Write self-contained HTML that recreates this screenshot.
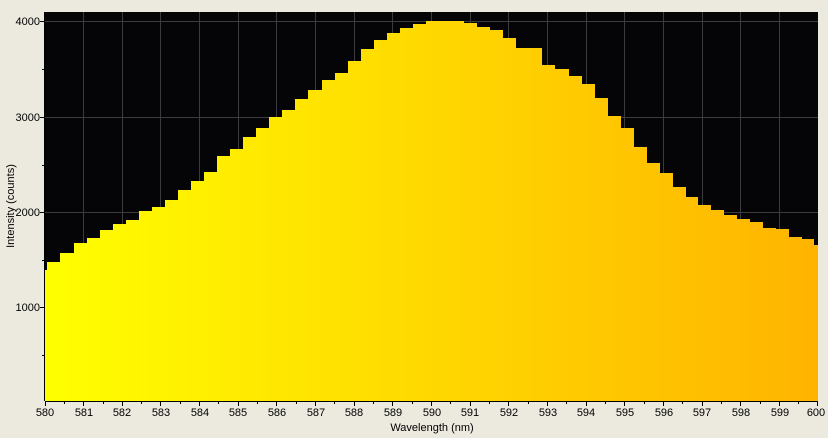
<!DOCTYPE html>
<html><head><style>
html,body{margin:0;padding:0;background:#ece9df;width:828px;height:438px;overflow:hidden}
svg{display:block}
text{font-family:"Liberation Sans",sans-serif;font-size:11px;fill:#000}
</style></head><body>
<svg width="828" height="438" viewBox="0 0 828 438">
<defs>
<linearGradient id="g" x1="45" y1="0" x2="818" y2="0" gradientUnits="userSpaceOnUse">
<stop offset="0" stop-color="#ffff00"/>
<stop offset="0.5" stop-color="#ffd800"/>
<stop offset="1" stop-color="#ffb400"/>
</linearGradient>
</defs>
<rect x="45" y="12" width="773" height="389" fill="#050407"/>
<g stroke="#3c3c3c" stroke-width="1">
<line x1="45" y1="21.5" x2="818" y2="21.5"/>
<line x1="45" y1="117.5" x2="818" y2="117.5"/>
<line x1="45" y1="212.5" x2="818" y2="212.5"/>
<line x1="45" y1="307.5" x2="818" y2="307.5"/>
<line x1="83.5" y1="12" x2="83.5" y2="401"/>
<line x1="122.5" y1="12" x2="122.5" y2="401"/>
<line x1="160.5" y1="12" x2="160.5" y2="401"/>
<line x1="199.5" y1="12" x2="199.5" y2="401"/>
<line x1="238.5" y1="12" x2="238.5" y2="401"/>
<line x1="276.5" y1="12" x2="276.5" y2="401"/>
<line x1="315.5" y1="12" x2="315.5" y2="401"/>
<line x1="354.5" y1="12" x2="354.5" y2="401"/>
<line x1="392.5" y1="12" x2="392.5" y2="401"/>
<line x1="431.5" y1="12" x2="431.5" y2="401"/>
<line x1="470.5" y1="12" x2="470.5" y2="401"/>
<line x1="508.5" y1="12" x2="508.5" y2="401"/>
<line x1="547.5" y1="12" x2="547.5" y2="401"/>
<line x1="586.5" y1="12" x2="586.5" y2="401"/>
<line x1="624.5" y1="12" x2="624.5" y2="401"/>
<line x1="663.5" y1="12" x2="663.5" y2="401"/>
<line x1="702.5" y1="12" x2="702.5" y2="401"/>
<line x1="740.5" y1="12" x2="740.5" y2="401"/>
<line x1="779.5" y1="12" x2="779.5" y2="401"/>
</g>
<polygon fill="url(#g)" points="45,401 45,270 47,270 47,262 60,262 60,253 74,253 74,243 87,243 87,238 100,238 100,230 113,230 113,224 126,224 126,220 139,220 139,211 152,211 152,207 165,207 165,200 178,200 178,190 191,190 191,181 204,181 204,172 217,172 217,156 230,156 230,149 243,149 243,137 256,137 256,128 269,128 269,117 282,117 282,110 295,110 295,99 308,99 308,90 322,90 322,80 335,80 335,73 348,73 348,61 361,61 361,49 374,49 374,40 387,40 387,33 400,33 400,28 413,28 413,24 426,24 426,21 464,21 464,23 477,23 477,27 490,27 490,30 503,30 503,38 516,38 516,48 542,48 542,65 555,65 555,69 569,69 569,76 582,76 582,84 595,84 595,98 608,98 608,116 621,116 621,128 634,128 634,147 647,147 647,163 660,163 660,173 673,173 673,187 686,187 686,197 698,197 698,205 711,205 711,210 724,210 724,215 737,215 737,219 750,219 750,222 763,222 763,228 776,228 776,229 789,229 789,237 802,237 802,239 814,239 814,245 818,245 818,401"/>
<g stroke="#000" stroke-width="1">
<line x1="45" y1="401.5" x2="818" y2="401.5"/>
<line x1="44.5" y1="12" x2="44.5" y2="401"/>
<line x1="40" y1="21.5" x2="45" y2="21.5"/>
<line x1="40" y1="117.5" x2="45" y2="117.5"/>
<line x1="40" y1="212.5" x2="45" y2="212.5"/>
<line x1="40" y1="307.5" x2="45" y2="307.5"/>
<line x1="42" y1="69.5" x2="45" y2="69.5"/>
<line x1="42" y1="165.5" x2="45" y2="165.5"/>
<line x1="42" y1="260.5" x2="45" y2="260.5"/>
<line x1="42" y1="355.5" x2="45" y2="355.5"/>
</g>
<g stroke="#000" stroke-width="1" id="xt"></g>
<g stroke="#000">
<path d="M45.5 401v5M83.5 401v5M122.5 401v5M160.5 401v5M199.5 401v5M238.5 401v5M276.5 401v5M315.5 401v5M354.5 401v5M392.5 401v5M431.5 401v5M470.5 401v5M508.5 401v5M547.5 401v5M586.5 401v5M624.5 401v5M663.5 401v5M702.5 401v5M740.5 401v5M779.5 401v5M817.5 401v5"/>
<path d="M64.5 401v3M103.5 401v3M141.5 401v3M180.5 401v3M218.5 401v3M257.5 401v3M296.5 401v3M334.5 401v3M373.5 401v3M412.5 401v3M450.5 401v3M489.5 401v3M528.5 401v3M566.5 401v3M605.5 401v3M644.5 401v3M682.5 401v3M721.5 401v3M760.5 401v3M798.5 401v3"/>
</g>
<g text-anchor="end">
<text x="40" y="25">4000</text>
<text x="40" y="121">3000</text>
<text x="40" y="216">2000</text>
<text x="40" y="311">1000</text>
</g>
<g text-anchor="middle">
<text x="45" y="416">580</text><text x="84" y="416">581</text><text x="122" y="416">582</text><text x="161" y="416">583</text><text x="200" y="416">584</text><text x="238" y="416">585</text><text x="277" y="416">586</text><text x="316" y="416">587</text><text x="354" y="416">588</text><text x="393" y="416">589</text><text x="432" y="416">590</text><text x="470" y="416">591</text><text x="509" y="416">592</text><text x="548" y="416">593</text><text x="586" y="416">594</text><text x="625" y="416">595</text><text x="664" y="416">596</text><text x="702" y="416">597</text><text x="741" y="416">598</text><text x="780" y="416">599</text><text x="816" y="416">600</text>
<text x="432" y="431">Wavelength (nm)</text>
<text transform="translate(14,206) rotate(-90)">Intensity (counts)</text>
</g>
</svg>
</body></html>
